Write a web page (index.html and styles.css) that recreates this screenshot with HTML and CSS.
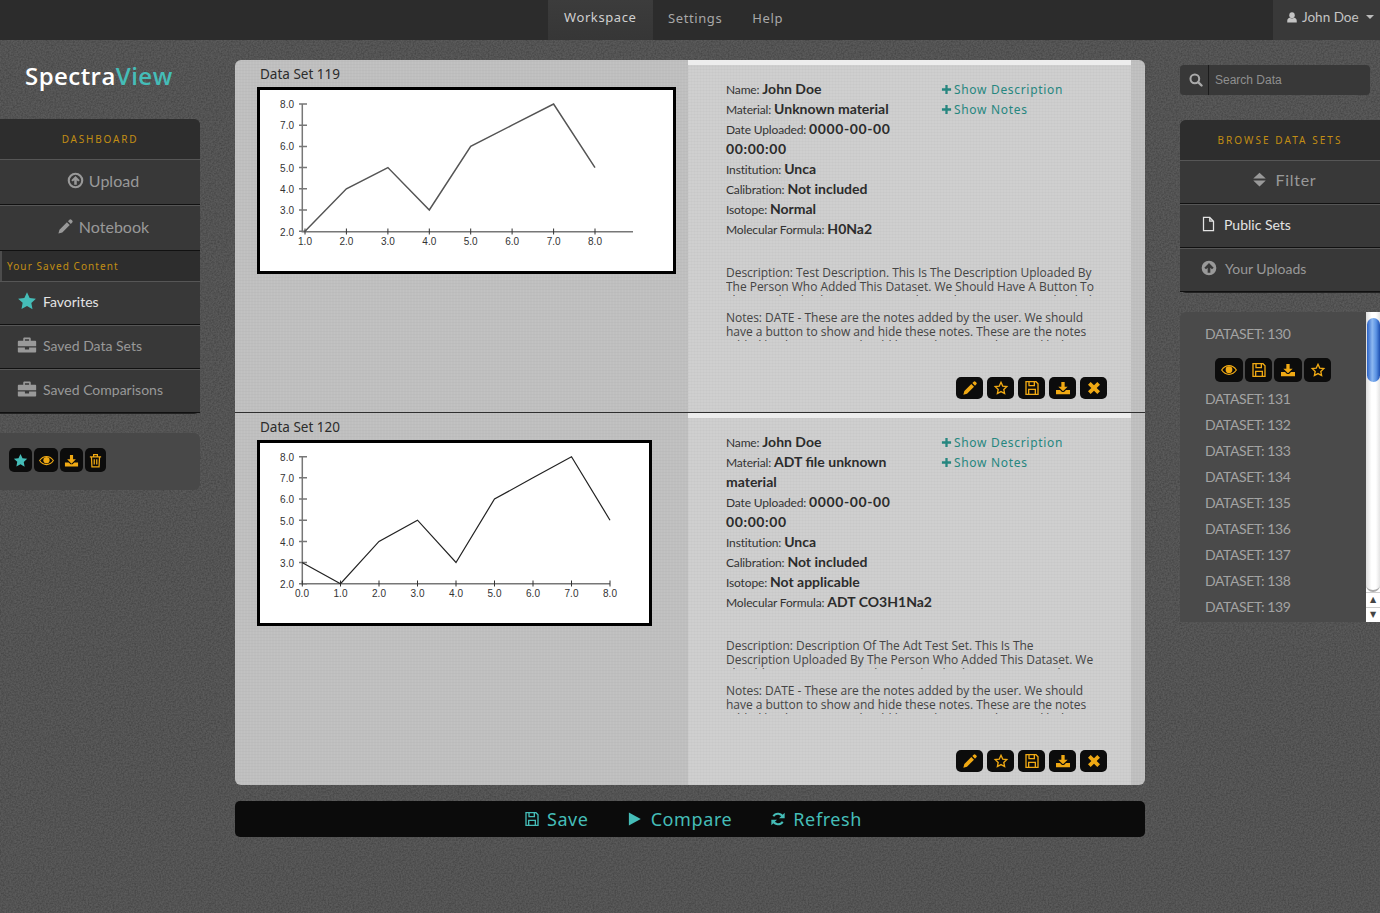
FILE: index.html
```html
<!DOCTYPE html>
<html lang="en">
<head>
<meta charset="utf-8">
<title>SpectraView</title>
<link rel="stylesheet" href="styles.css">
</head>
<body>
<svg class="sprite" xmlns="http://www.w3.org/2000/svg" aria-hidden="true">
  <symbol id="i-star" viewBox="0 0 24 24"><path d="M12 1.500l3.200 6.900 7.500.9-5.500 5.200 1.400 7.500L12 18l-6.600 3.500 1.400-7.500L1.300 9.300l7.500-.9z"/></symbol>
  <symbol id="i-staro" viewBox="0 0 24 24"><path fill="none" stroke="currentColor" stroke-width="2" d="M12 3.500l2.600 5.700 6.100.7-4.500 4.300 1.200 6.100L12 17.400l-5.400 2.900 1.200-6.100-4.500-4.300 6.100-.7z"/></symbol>
  <symbol id="i-eye" viewBox="0 0 24 24"><path fill="none" stroke="currentColor" stroke-width="1.800" d="M1 12C4 7.500 8 5.500 12 5.500s8 2 11 6.500c-3 4.500-7 6.500-11 6.500S4 16.500 1 12z"/><circle cx="12" cy="11.500" r="5"/></symbol>
  <symbol id="i-save" viewBox="0 0 24 24"><path fill="none" stroke="currentColor" stroke-width="2" d="M3 2.500h15l3 3V21.500H3zM7.500 2.500v6h8v-6M7 21.500v-7.500h10v7.500"/></symbol>
  <symbol id="i-down" viewBox="0 0 24 24"><path d="M9.500 3h5v7h4.500L12 17 5 10h4.500z"/><path d="M1.500 15h6l3 3h3l3-3h6v6.500h-21z"/></symbol>
  <symbol id="i-pencil" viewBox="0 0 24 24"><path d="M17.500 2.500a2 2 0 0 1 2.800 0l1.200 1.200a2 2 0 0 1 0 2.800L19.500 8.500 15.500 4.500zM14 6l4 4L7.500 20.500 2 22l1.500-5.500z"/></symbol>
  <symbol id="i-x" viewBox="0 0 24 24"><path d="M7 3l5 5 5-5 4 4-5 5 5 5-4 4-5-5-5 5-4-4 5-5-5-5z"/></symbol>
  <symbol id="i-trash" viewBox="0 0 24 24"><path fill="none" stroke="currentColor" stroke-width="2" d="M3 6h18M9 6V2.500h6V6M5.500 6l.8 16h11.400l.8-16M10 10v8.500M14 10v8.500"/></symbol>
  <symbol id="i-refresh" viewBox="0 0 24 24"><path fill="none" stroke="currentColor" stroke-width="3" d="M19.500 9.500a8 8 0 0 0-14.500-1.500M4.500 14.500a8 8 0 0 0 14.500 1.500"/><path d="M22 2.500V11h-8.500zM2 21.500V13h8.500z"/></symbol>
  <symbol id="i-play" viewBox="0 0 24 24"><path d="M3 1.500l19 10.500L3 22.500z"/></symbol>
  <symbol id="i-plus" viewBox="0 0 24 24"><path d="M9.500 2h5v7.500H22v5h-7.500V22h-5v-7.500H2v-5h7.500z"/></symbol>
  <symbol id="i-search" viewBox="0 0 24 24"><circle cx="10" cy="10" r="7.500" fill="none" stroke="currentColor" stroke-width="3.500"/><path fill="none" stroke="currentColor" stroke-width="4" stroke-linecap="round" d="M16 16l5.500 5.500"/></symbol>
  <symbol id="i-user" viewBox="0 0 24 24"><ellipse cx="12" cy="7.500" rx="5.500" ry="6"/><path d="M2.500 22v-3.500C2.500 15 5 13 7.500 12.500c1.200 1 2.800 1.500 4.500 1.500s3.300-.5 4.500-1.500c2.500.5 5 2.500 5 6V22z"/></symbol>
  <symbol id="i-sort" viewBox="0 0 24 24"><path d="M12 1l10 9.500H2zM12 23L2 13.500h20z"/></symbol>
  <symbol id="i-file" viewBox="0 0 24 24"><path fill="none" stroke="currentColor" stroke-width="2" d="M4 1.500h10l6 6v15H4zM14 1.500v6h6"/></symbol>
  <symbol id="i-ring" viewBox="0 0 24 24"><circle cx="12" cy="12" r="9.500" fill="none" stroke="currentColor" stroke-width="3"/><path d="M12 5.500l6 6-2.200 2-2-1.800V18h-3.600v-6.300l-2 1.800-2.200-2z"/></symbol>
  <symbol id="i-circleup" viewBox="0 0 24 24"><path fill-rule="evenodd" d="M12 1a11 11 0 1 0 0 22 11 11 0 1 0 0-22zM12 4.500l7 7-2.500 2.500-2.500-2.300V19h-4v-7.300L7.500 14 5 11.500z"/></symbol>
  <symbol id="i-case" viewBox="0 0 24 24"><path fill-rule="evenodd" d="M7.500 7V4.500C7.500 3.700 8.200 3 9 3h6c.8 0 1.500.7 1.500 1.500V7H22c.6 0 1 .4 1 1v5.500H1V8c0-.6.4-1 1-1zM9.500 5v2h5V5z"/><path d="M1 15h8.500v2.500h5V15H23v5c0 .6-.4 1-1 1H2c-.6 0-1-.4-1-1z"/></symbol>
</svg>

<header class="topbar">
  <nav class="topnav">
    <a class="topnav-item is-active">Workspace</a>
    <a class="topnav-item">Settings</a>
    <a class="topnav-item">Help</a>
  </nav>
  <div class="usermenu">
    <svg class="ico ico-user"><use href="#i-user"/></svg>
    <span>John Doe</span>
    <span class="caret"></span>
  </div>
</header>

<div class="layout">
  <aside class="left">
    <div class="logo">Spectra<span class="logo-accent">View</span></div>
    <div class="menu menu-left">
      <div class="menu-head">DASHBOARD</div>
      <a class="menu-item menu-big"><svg class="ico ico-big"><use href="#i-ring"/></svg>Upload</a>
      <a class="menu-item menu-big"><svg class="ico ico-big"><use href="#i-pencil"/></svg>Notebook</a>
      <div class="menu-sub">Your Saved Content</div>
      <a class="menu-item menu-row is-on"><svg class="ico ico-row ico-teal"><use href="#i-star"/></svg>Favorites</a>
      <a class="menu-item menu-row"><svg class="ico ico-row"><use href="#i-case"/></svg>Saved Data Sets</a>
      <a class="menu-item menu-row"><svg class="ico ico-row"><use href="#i-case"/></svg>Saved Comparisons</a>
    </div>
    <div class="tray">
      <button class="btn btn-s btn-teal"><svg class="ico"><use href="#i-star"/></svg></button>
      <button class="btn btn-s"><svg class="ico"><use href="#i-eye"/></svg></button>
      <button class="btn btn-s btn-w23"><svg class="ico"><use href="#i-down"/></svg></button>
      <button class="btn btn-s btn-w21"><svg class="ico"><use href="#i-trash"/></svg></button>
    </div>
  </aside>

  <main class="main">
    <section class="panel">
      <article class="row">
        <div class="row-chart">
          <h2 class="row-title">Data Set 119</h2>
          <div class="chart chart-a">
            <svg class="plot plot-a" width="413" height="181" viewBox="0 0 413 181">
              <g class="axis"><path d="M42.300 14V141.700H373"/><path d="M39 14h8M39 35.200h8M39 56.400h8M39 77.600h8M39 98.800h8M39 120h8M39 141.200h8"/></g>
              <g class="ticks"><path d="M45 138.500v6M86.400 138.500v6M127.900 138.500v6M169.300 138.500v6M210.700 138.500v6M252.100 138.500v6M293.600 138.500v6M335 138.500v6"/></g>
              <polyline class="line line-a" points="45,141.200 86.400,98.800 127.900,77.600 169.300,120 210.700,56.400 252.100,35.200 293.600,14 335,77.600"/>
              <g class="ylab"><text x="34" y="18">8.0</text><text x="34" y="39.200">7.0</text><text x="34" y="60.400">6.0</text><text x="34" y="81.600">5.0</text><text x="34" y="102.800">4.0</text><text x="34" y="124">3.0</text><text x="34" y="145.500">2.0</text></g>
              <g class="xlab"><text x="45" y="155.300">1.0</text><text x="86.400" y="155.300">2.0</text><text x="127.900" y="155.300">3.0</text><text x="169.300" y="155.300">4.0</text><text x="210.700" y="155.300">5.0</text><text x="252.100" y="155.300">6.0</text><text x="293.600" y="155.300">7.0</text><text x="335" y="155.300">8.0</text></g>
            </svg>
          </div>
        </div>
        <div class="row-info">
          <div class="info-top">
            <dl class="facts">
              <div>Name: <b>John Doe</b></div>
              <div>Material: <b>Unknown material</b></div>
              <div>Date Uploaded: <b class="num">0000-00-00 00:00:00</b></div>
              <div>Institution: <b>Unca</b></div>
              <div>Calibration: <b>Not included</b></div>
              <div>Isotope: <b>Normal</b></div>
              <div>Molecular Formula: <b>H0Na2</b></div>
            </dl>
            <div class="links">
              <a class="link"><svg class="ico ico-plus"><use href="#i-plus"/></svg>Show Description</a>
              <a class="link"><svg class="ico ico-plus"><use href="#i-plus"/></svg>Show Notes</a>
            </div>
          </div>
          <p class="clip clip-desc">Description: Test Description. This Is The Description Uploaded By The Person Who Added This Dataset. We Should Have A Button To Show And Hide This Description. This Is The Description Uploaded By</p>
          <p class="clip clip-notes">Notes: DATE - These are the notes added by the user. We should have a button to show and hide these notes. These are the notes added by the user. We should have a button to show and hide</p>
          <div class="actions">
            <button class="btn btn-m"><svg class="ico"><use href="#i-pencil"/></svg></button>
            <button class="btn btn-m"><svg class="ico"><use href="#i-staro"/></svg></button>
            <button class="btn btn-m"><svg class="ico"><use href="#i-save"/></svg></button>
            <button class="btn btn-m"><svg class="ico"><use href="#i-down"/></svg></button>
            <button class="btn btn-m"><svg class="ico"><use href="#i-x"/></svg></button>
          </div>
        </div>
        <div class="row-edge"></div>
      </article>

      <article class="row row-last">
        <div class="row-chart">
          <h2 class="row-title">Data Set 120</h2>
          <div class="chart chart-b">
            <svg class="plot plot-b" width="389" height="180" viewBox="0 0 389 180">
              <g class="axis"><path d="M42.300 13.700V140.700H350"/><path d="M39 13.700h8M39 34.800h8M39 56h8M39 77.200h8M39 98.400h8M39 119.500h8M39 140.700h8"/></g>
              <g class="ticks"><path d="M42.300 137.500v6M80.500 137.500v6M119 137.500v6M157.500 137.500v6M196 137.500v6M234.500 137.500v6M273 137.500v6M311.500 137.500v6M350 137.500v6"/></g>
              <polyline class="line line-b" points="42,119.500 80.500,140.700 119,98.400 157.500,77.200 196,119.500 234.500,56 273,34.800 311.500,13.700 350,77.200"/>
              <g class="ylab"><text x="34" y="18">8.0</text><text x="34" y="39.100">7.0</text><text x="34" y="60.300">6.0</text><text x="34" y="81.500">5.0</text><text x="34" y="102.700">4.0</text><text x="34" y="123.800">3.0</text><text x="34" y="145">2.0</text></g>
              <g class="xlab"><text x="42" y="154">0.0</text><text x="80.500" y="154">1.0</text><text x="119" y="154">2.0</text><text x="157.500" y="154">3.0</text><text x="196" y="154">4.0</text><text x="234.500" y="154">5.0</text><text x="273" y="154">6.0</text><text x="311.500" y="154">7.0</text><text x="350" y="154">8.0</text></g>
            </svg>
          </div>
        </div>
        <div class="row-info">
          <div class="info-top">
            <dl class="facts">
              <div>Name: <b>John Doe</b></div>
              <div>Material: <b>ADT file unknown material</b></div>
              <div>Date Uploaded: <b class="num">0000-00-00 00:00:00</b></div>
              <div>Institution: <b>Unca</b></div>
              <div>Calibration: <b>Not included</b></div>
              <div>Isotope: <b>Not applicable</b></div>
              <div>Molecular Formula: <b>ADT CO3H1Na2</b></div>
            </dl>
            <div class="links">
              <a class="link"><svg class="ico ico-plus"><use href="#i-plus"/></svg>Show Description</a>
              <a class="link"><svg class="ico ico-plus"><use href="#i-plus"/></svg>Show Notes</a>
            </div>
          </div>
          <p class="clip clip-desc">Description: Description Of The Adt Test Set. This Is The Description Uploaded By The Person Who Added This Dataset. We Should Have A Button To Show And Hide This Description. This Is The Description</p>
          <p class="clip clip-notes">Notes: DATE - These are the notes added by the user. We should have a button to show and hide these notes. These are the notes added by the user. We should have a button to show and hide</p>
          <div class="actions">
            <button class="btn btn-m"><svg class="ico"><use href="#i-pencil"/></svg></button>
            <button class="btn btn-m"><svg class="ico"><use href="#i-staro"/></svg></button>
            <button class="btn btn-m"><svg class="ico"><use href="#i-save"/></svg></button>
            <button class="btn btn-m"><svg class="ico"><use href="#i-down"/></svg></button>
            <button class="btn btn-m"><svg class="ico"><use href="#i-x"/></svg></button>
          </div>
        </div>
        <div class="row-edge"></div>
      </article>
    </section>

    <div class="bar">
      <a class="bar-item"><svg class="ico ico-bar"><use href="#i-save"/></svg>Save</a>
      <a class="bar-item"><svg class="ico ico-bar ico-play"><use href="#i-play"/></svg>Compare</a>
      <a class="bar-item"><svg class="ico ico-bar"><use href="#i-refresh"/></svg>Refresh</a>
    </div>
  </main>

  <aside class="right">
    <div class="search">
      <span class="search-icon"><svg class="ico"><use href="#i-search"/></svg></span>
      <input class="search-input" type="text" placeholder="Search Data">
    </div>
    <div class="menu menu-right">
      <div class="menu-head menu-head-r">BROWSE DATA SETS</div>
      <a class="menu-item menu-filter"><svg class="ico ico-sort"><use href="#i-sort"/></svg>Filter</a>
      <a class="menu-item menu-rrow is-on"><svg class="ico ico-file"><use href="#i-file"/></svg>Public Sets</a>
      <a class="menu-item menu-rrow"><svg class="ico ico-up"><use href="#i-circleup"/></svg>Your Uploads</a>
    </div>
    <div class="datasets">
      <ul class="dslist">
        <li class="ds">DATASET: 130</li>
        <li class="ds-tools">
          <button class="btn btn-l"><svg class="ico"><use href="#i-eye"/></svg></button>
          <button class="btn btn-l btn-w27"><svg class="ico"><use href="#i-save"/></svg></button>
          <button class="btn btn-l"><svg class="ico"><use href="#i-down"/></svg></button>
          <button class="btn btn-l btn-w27"><svg class="ico"><use href="#i-staro"/></svg></button>
        </li>
        <li class="ds">DATASET: 131</li>
        <li class="ds">DATASET: 132</li>
        <li class="ds">DATASET: 133</li>
        <li class="ds">DATASET: 134</li>
        <li class="ds">DATASET: 135</li>
        <li class="ds">DATASET: 136</li>
        <li class="ds">DATASET: 137</li>
        <li class="ds">DATASET: 138</li>
        <li class="ds">DATASET: 139</li>
      </ul>
      <div class="scroll">
        <div class="scroll-track"><div class="scroll-thumb"></div></div>
        <div class="scroll-btn">&#9650;</div>
        <div class="scroll-btn">&#9660;</div>
      </div>
    </div>
  </aside>
</div>
</body>
</html>
```
FILE: styles.css
```css
* { box-sizing: border-box; }
html, body { margin: 0; padding: 0; }
body {
  width: 1380px;
  height: 913px;
  overflow: hidden;
  background-color: #5a5a5a;
  background-image: url("data:image/svg+xml,%3Csvg xmlns='http://www.w3.org/2000/svg' width='240' height='240'%3E%3Cfilter id='n'%3E%3CfeTurbulence type='fractalNoise' baseFrequency='.6' numOctaves='3' stitchTiles='stitch'/%3E%3CfeColorMatrix values='0 0 0 0 0 0 0 0 0 0 0 0 0 0 0 .4 0 0 0 -.12'/%3E%3C/filter%3E%3Crect width='240' height='240' filter='url(%23n)'/%3E%3C/svg%3E");
  font-family: Lato, "Noto Sans", sans-serif;
  color: #333;
}
a { color: inherit; text-decoration: none; }
.sprite { display: none; }
.ico { display: block; width: 14px; height: 14px; fill: currentColor; flex: none; }

/* top bar */
.topbar {
  display: flex;
  justify-content: space-between;
  height: 40px;
  padding-left: 548px;
  background: #2c2c2c;
}
.topnav { display: flex; }
.topnav-item {
  display: flex;
  align-items: center;
  padding: 0 15px 4px;
  font-family: "Noto Sans", sans-serif;
  font-size: 13px;
  letter-spacing: .6px;
  color: #a8a8a8;
}
.topnav-item.is-active {
  width: 105px;
  padding: 0 0 6px 16px;
  color: #d0d0d0;
  background: linear-gradient(#3c3c3c, #363636);
}
.usermenu {
  display: flex;
  align-items: center;
  width: 107px;
  padding: 0 0 6px 13px;
  background: #393939;
  color: #c4c4c4;
  font-size: 13.5px;
}
.ico-user { width: 12px; height: 13px; margin-right: 4px; }
.caret {
  margin-left: 7px;
  border-left: 4px solid transparent;
  border-right: 4px solid transparent;
  border-top: 4px solid #bbb;
}

/* columns */
.layout {
  display: grid;
  grid-template-columns: 200px 910px 200px;
  column-gap: 35px;
  align-items: start;
}

/* left */
.logo {
  height: 79px;
  padding: 20px 0 0 25px;
  font-family: "Open Sans", sans-serif;
  font-size: 24px;
  line-height: 32px;
  font-weight: 600;
  letter-spacing: .45px;
  color: #fff;
}
.logo-accent { color: #45bdb8; }
.menu { background: #383838; box-shadow: 0 1px 0 #222; }
.menu-left { border-radius: 0 6px 6px 0; }
.menu-right { border-radius: 6px 0 0 6px; margin-top: 25px; }
.menu-head {
  height: 40px;
  line-height: 40px;
  text-align: center;
  background: #2d2d2d;
  border-radius: 0 6px 0 0;
  font-family: "Noto Sans", sans-serif;
  font-size: 10px;
  letter-spacing: 1.8px;
  color: #c28e14;
}
.menu-head-r { border-radius: 6px 0 0 0; letter-spacing: 2.05px; }
.menu-sub {
  height: 30px;
  padding-left: 5px;
  line-height: 31px;
  background: #2d2d2d;
  border-left: 2px solid #4c4c4c;
  font-family: "Noto Sans", sans-serif;
  font-size: 10px;
  letter-spacing: 1.08px;
  color: #c28e14;
}
.menu-item {
  display: flex;
  align-items: center;
  height: 44px;
  padding-bottom: 4px;
  background: #383838;
  border-top: 1px solid #565656;
  border-bottom: 1px solid #111;
  color: #999;
}
.menu-big {
  height: 46px;
  justify-content: center;
  gap: 5px;
  padding-left: 6px;
  font-size: 16px;
}
.ico-big { width: 17px; height: 17px; }
.menu-row { padding-left: 17px; gap: 6px; font-size: 14px; }
.ico-row { width: 20px; height: 20px; }
.ico-teal { color: #45bdb8; }
.is-on { color: #e4e4e4; }
.is-on .ico-teal { color: #45bdb8; }

.tray {
  display: flex;
  gap: 2px;
  height: 57px;
  margin-top: 20px;
  padding: 15px 0 0 9px;
  background: #484848;
  border-radius: 0 6px 6px 0;
}

/* buttons */
.btn {
  display: flex;
  align-items: center;
  justify-content: center;
  padding: 0;
  border: 0;
  background: #0c0c0c;
  color: #f0a913;
  border-radius: 5px;
}
.btn-s { width: 24px; height: 24px; }
.btn-s .ico { width: 15px; height: 15px; }
.btn-w23 { width: 23px; }
.btn-w21 { width: 21px; }
.btn-teal { color: #45bdb8; width: 23px; }
.btn-m { width: 27px; height: 22px; }
.btn-m .ico { width: 16px; height: 16px; }
.btn-l { width: 28px; height: 24px; }
.btn-l .ico { width: 16px; height: 16px; }
.btn-w27 { width: 27px; }

/* main */
.main { padding-top: 20px; }
.panel {
  overflow: hidden;
  border-radius: 6px;
  background-color: #bfbfbf;
  background-image:
    repeating-linear-gradient(0deg, rgba(0,0,0,.025) 0 1px, transparent 1px 3px),
    repeating-linear-gradient(90deg, rgba(255,255,255,.05) 0 1px, transparent 1px 3px);
}
.row {
  display: grid;
  grid-template-columns: 453px 443px 14px;
  border-bottom: 1px solid #2f2f2f;
}
.row-last { border-bottom: 0; }
.row-chart { padding-left: 22px; }
.row-title {
  margin: 0;
  height: 27px;
  padding: 6px 0 0 3px;
  font-family: "Noto Sans", sans-serif;
  font-weight: 400;
  font-size: 13.5px;
  line-height: 16px;
  color: #2c2c2c;
}
.chart { background: #fff; border: 3px solid #000; }
.chart-a { width: 419px; height: 187px; }
.chart-b { width: 395px; height: 186px; }
.plot { display: block; }
.axis path { fill: none; stroke: #777; stroke-width: 1.5; }
.ticks path { fill: none; stroke: #333; stroke-width: 1; }
.line { fill: none; }
.line-a { stroke: #555; stroke-width: 1.5; }
.line-b { stroke: #222; stroke-width: 1.2; }
.plot text { font-family: "Liberation Sans", sans-serif; font-size: 10px; fill: #333; }
.ylab text { text-anchor: end; }
.xlab text { text-anchor: middle; }

.row-info {
  padding: 15px 24px 13px 38px;
  border-top: 5px solid #ededed;
  background-color: #cfcfcf;
  background-image:
    repeating-linear-gradient(0deg, rgba(0,0,0,.02) 0 1px, transparent 1px 3px),
    repeating-linear-gradient(90deg, rgba(0,0,0,.015) 0 1px, transparent 1px 3px);
}
.info-top { display: flex; margin-top: -1px; }
.facts {
  width: 215px;
  margin: 1px 0 0;
  padding-right: 5px;
  font-size: 12px;
  letter-spacing: -.15px;
  line-height: 20px;
  color: #333;
}
.facts b { font-size: 14px; line-height: 1; font-weight: 700; letter-spacing: 0; color: #2c2c2c; }
.facts .num { letter-spacing: .6px; }
.links { display: flex; flex-direction: column; }
.link {
  display: flex;
  align-items: center;
  gap: 2px;
  height: 20px;
  font-family: "Noto Sans", sans-serif;
  font-size: 12px;
  letter-spacing: .68px;
  color: #26867f;
}
.ico-plus { width: 11px; height: 11px; }
.clip {
  height: 30px;
  margin: 0;
  padding-right: 12px;
  overflow: hidden;
  font-family: "Open Sans", sans-serif;
  font-size: 12px;
  letter-spacing: -.03px;
  line-height: 14px;
  color: #444;
}
.clip-desc { margin-top: 26px; }
.clip-notes { margin-top: 15px; }
.actions { display: flex; justify-content: flex-end; gap: 4px; margin-top: 36px; }

.bar {
  display: flex;
  justify-content: center;
  gap: 38px;
  height: 36px;
  margin-top: 16px;
  padding-left: 6px;
  background: #0b0b0b;
  border-radius: 5px;
}
.bar-item {
  display: flex;
  align-items: center;
  gap: 7px;
  font-family: "Noto Sans", sans-serif;
  font-size: 18px;
  letter-spacing: .6px;
  color: #45bdb8;
}
.ico-bar { width: 16px; height: 16px; }
.ico-play { width: 15px; margin-right: 2px; }

/* right */
.search {
  display: flex;
  width: 190px;
  height: 30px;
  margin-top: 25px;
  background: #383838;
  border-radius: 4px;
  overflow: hidden;
}
.search-icon {
  display: flex;
  align-items: center;
  justify-content: center;
  width: 29px;
  padding-left: 3px;
  border-right: 1px solid #1c1c1c;
  color: #aaa;
}
.search-input {
  flex: 1;
  min-width: 0;
  padding: 0 0 0 6px;
  border: 0;
  background: transparent;
  font-family: "Liberation Sans", sans-serif;
  font-size: 12px;
  color: #999;
}
.search-input::placeholder { color: #8f8f8f; opacity: 1; }
.menu-filter {
  justify-content: center;
  gap: 9px;
  padding-left: 8px;
  padding-bottom: 6px;
  font-size: 16px;
  letter-spacing: .7px;
}
.ico-sort { width: 15px; height: 15px; }
.menu-rrow { padding-left: 21px; gap: 8px; font-size: 14px; }
.ico-file { width: 15px; height: 16px; }
.ico-up { width: 16px; height: 16px; }

.datasets {
  display: flex;
  height: 310px;
  margin-top: 20px;
  border-radius: 6px 0 0 0;
  overflow: hidden;
}
.dslist {
  flex: 1;
  margin: 0;
  padding: 9px 0 0;
  list-style: none;
  background: #4a4a4a;
  overflow: hidden;
}
.ds {
  height: 26px;
  padding-left: 25px;
  font-size: 14px;
  letter-spacing: -.4px;
  line-height: 26px;
  color: #a3a3a3;
}
.ds-tools { display: flex; gap: 2px; padding: 11px 0 4px 35px; }
.scroll {
  display: flex;
  flex-direction: column;
  width: 14px;
  background: #fff;
}
.scroll-track {
  flex: 1;
  padding-top: 6px;
  border-bottom: 2px solid #aaa;
  border-radius: 0 0 7px 7px;
  background: linear-gradient(90deg, #ddd, #fff 40%, #fff 70%, #e4e4e4);
}
.scroll-thumb {
  width: 13px;
  height: 64px;
  margin-left: 1px;
  border-radius: 7px;
  background: linear-gradient(90deg, #2a62c8, #8db8f0 40%, #5b93e4 70%, #1d4fb0);
}
.scroll-btn {
  height: 15px;
  border-top: 1px solid #ccc;
  font-size: 8px;
  line-height: 14px;
  text-align: center;
  color: #444;
  font-family: "DejaVu Sans", sans-serif;
}
```
